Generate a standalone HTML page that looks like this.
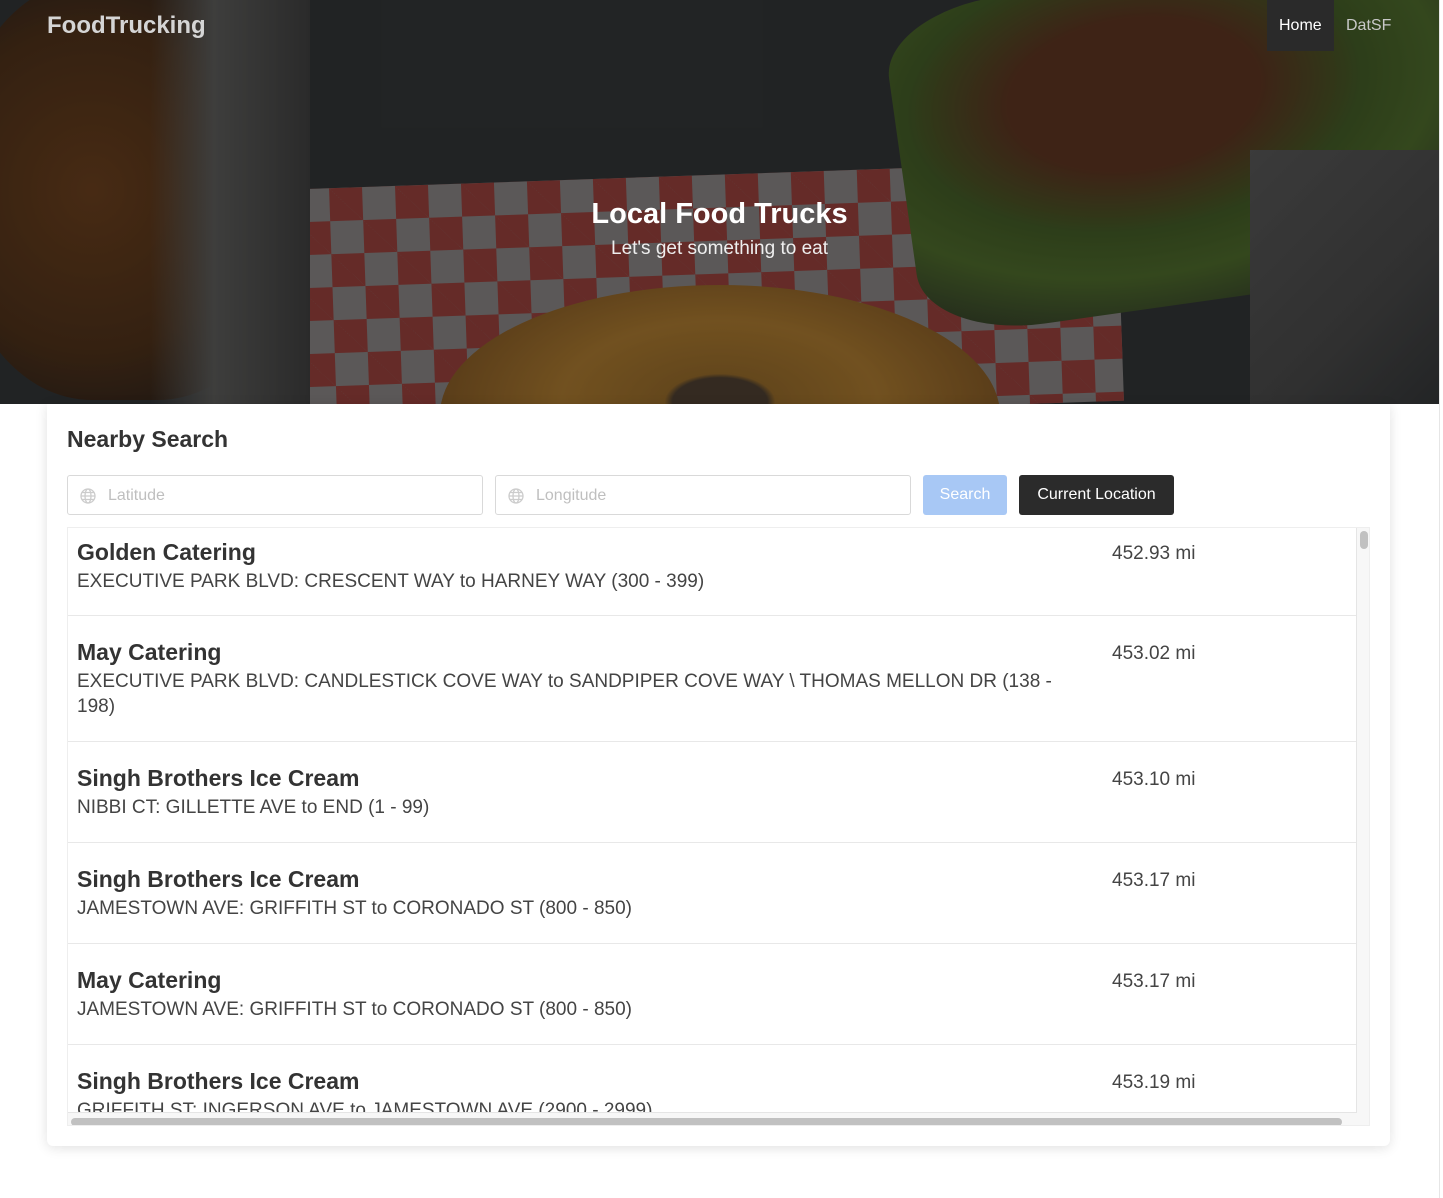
<!DOCTYPE html>
<html><head><meta charset="utf-8"><style>
*{box-sizing:border-box;margin:0;padding:0}
body{width:1443px;height:1198px;background:#fff;font-family:"Liberation Sans",sans-serif;color:#333;position:relative;overflow:hidden}
.hero{position:absolute;left:0;top:0;width:1439px;height:404px;background:#2b2e30;overflow:hidden}
.hero div{position:absolute}
.check{left:300px;top:175px;width:820px;height:240px;background-color:#8a8686;background-image:linear-gradient(45deg,#9c3b36 25%,transparent 25%,transparent 75%,#9c3b36 75%),linear-gradient(45deg,#9c3b36 25%,transparent 25%,transparent 75%,#9c3b36 75%);background-size:66px 66px;background-position:0 0,33px 33px;transform:rotate(-2deg)}
.pizza{left:440px;top:285px;width:560px;height:260px;border-radius:50%;background:radial-gradient(ellipse at 50% 45%,#4a3a2a 0 12%,#9a6a22 14%,#b07a28 40%,#8a5a1e 70%)}
.wings{left:-40px;top:-20px;width:330px;height:420px;border-radius:40%;background:radial-gradient(ellipse at 40% 50%,#6a3a14,#4a2a10 55%,#2a1c12 80%)}
.plateL{left:150px;top:0;width:160px;height:404px;background:linear-gradient(90deg,transparent,#5a5a58 40%,#3a3a3a)}
.right{left:900px;top:-30px;width:600px;height:330px;background:radial-gradient(ellipse at 40% 35%,#5a2e18 0 25%,#3e5a1e 45%,#4a6a24 60%,#2e3a22 80%);transform:rotate(-8deg);border-radius:20%}
.plateR{left:1250px;top:150px;width:200px;height:260px;background:linear-gradient(135deg,#555 0,#444 60%,#2b2e30)}
.brand{position:absolute;left:47px;top:12px;font-size:24px;font-weight:bold;color:#d5d5d5}
.nav{position:absolute;top:0;left:1267px;height:51px;display:flex}
.nav a{display:block;padding:0 12px;line-height:51px;font-size:16px;color:#c8c8c8;text-decoration:none}
.nav a.act{background:#2a2a2a;color:#fff;width:67px}
.h1{position:absolute;top:198px;left:0;width:1439px;text-align:center;font-size:29px;font-weight:bold;color:#fff}
.h2{position:absolute;top:238px;left:0;width:1439px;text-align:center;font-size:19px;color:#eee}
.card{position:absolute;left:47px;top:404px;width:1343px;height:742px;background:#fff;border-radius:0 0 6px 6px;box-shadow:0 2px 12px rgba(0,0,0,.12)}
.card h3{position:absolute;left:20px;top:22px;font-size:23px;font-weight:bold;color:#333}
.inp{position:absolute;top:71px;height:40px;border:1px solid #d9d9d9;border-radius:3px;font-size:16px;color:#bfbfbf;line-height:40px;padding-left:40px}
.inp svg{position:absolute;left:12px;top:12px}
.btn{position:absolute;top:71px;height:40px;border-radius:3px;font-size:16px;line-height:40px;text-align:center}
.list{position:absolute;left:20px;top:123px;width:1303px;height:599px;border:1px solid #eee;background:#f7f7f7;overflow:hidden}
.inner{position:absolute;left:0;top:0;width:1289px;height:585px;background:#fff;border-right:1px solid #e5e5e5;border-bottom:1px solid #e5e5e5;overflow:hidden}
.row{position:relative;border-bottom:1px solid #e8e8e8;padding:22px 9px 0}
.row:first-child{padding-top:10px}
.row .t{font-size:23px;font-weight:bold;color:#333;line-height:28px}
.row .s{font-size:19px;color:#444;line-height:25px;width:980px;margin-top:3px}
.row .d{position:absolute;left:1044px;top:27px;font-size:19px;color:#444}
.row:first-child .d{top:15px}
.vs{position:absolute;left:1292px;top:3px;width:8px;height:18px;border-radius:4px;background:#c1c1c1}
.hs{position:absolute;left:3px;top:590px;width:1271px;height:8px;border-radius:4px;background:#c1c1c1}
.edge{position:absolute;left:1439px;top:0;width:1px;height:1198px;background:#e6e6e6}
</style></head><body>
<div class="hero">
<div class="check"></div><div class="wings"></div><div class="plateL"></div><div class="right"></div><div class="plateR"></div><div class="pizza"></div>
<div style="left:0;top:0;width:1439px;height:404px;background:rgba(20,20,20,.4)"></div>
</div>
<div class="brand">FoodTrucking</div>
<div class="nav"><a class="act">Home</a><a>DatSF</a></div>
<div class="h1">Local Food Trucks</div>
<div class="h2">Let's get something to eat</div>
<div class="edge"></div>
<div class="card">
<h3>Nearby Search</h3>
<div class="inp" style="left:20px;width:416px"><svg width="16" height="16" viewBox="0 0 16 16" fill="none" stroke="#ccc" stroke-width="1.3"><circle cx="8" cy="8" r="7"/><ellipse cx="8" cy="8" rx="3" ry="7"/><path d="M1 8h14M2 4.5h12M2 11.5h12"/></svg>Latitude</div>
<div class="inp" style="left:448px;width:416px"><svg width="16" height="16" viewBox="0 0 16 16" fill="none" stroke="#ccc" stroke-width="1.3"><circle cx="8" cy="8" r="7"/><ellipse cx="8" cy="8" rx="3" ry="7"/><path d="M1 8h14M2 4.5h12M2 11.5h12"/></svg>Longitude</div>
<div class="btn" style="left:876px;width:84px;background:#a8c8f5;color:#fff">Search</div>
<div class="btn" style="left:972px;width:155px;background:#2b2b2b;color:#fff">Current Location</div>
<div class="list"><div class="inner">
<div class="row" style="height:88px"><div class="t">Golden Catering</div><div class="s">EXECUTIVE PARK BLVD: CRESCENT WAY to HARNEY WAY (300 - 399)</div><div class="d">452.93 mi</div></div>
<div class="row" style="height:126px"><div class="t">May Catering</div><div class="s">EXECUTIVE PARK BLVD: CANDLESTICK COVE WAY to SANDPIPER COVE WAY \ THOMAS MELLON DR (138 - 198)</div><div class="d">453.02 mi</div></div>
<div class="row" style="height:101px"><div class="t">Singh Brothers Ice Cream</div><div class="s">NIBBI CT: GILLETTE AVE to END (1 - 99)</div><div class="d">453.10 mi</div></div>
<div class="row" style="height:101px"><div class="t">Singh Brothers Ice Cream</div><div class="s">JAMESTOWN AVE: GRIFFITH ST to CORONADO ST (800 - 850)</div><div class="d">453.17 mi</div></div>
<div class="row" style="height:101px"><div class="t">May Catering</div><div class="s">JAMESTOWN AVE: GRIFFITH ST to CORONADO ST (800 - 850)</div><div class="d">453.17 mi</div></div>
<div class="row" style="height:101px"><div class="t">Singh Brothers Ice Cream</div><div class="s">GRIFFITH ST: INGERSON AVE to JAMESTOWN AVE (2900 - 2999)</div><div class="d">453.19 mi</div></div>
</div><div class="vs"></div><div class="hs"></div></div>
</div>
</body></html>
